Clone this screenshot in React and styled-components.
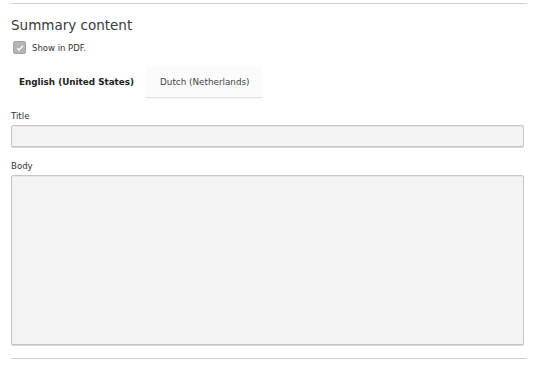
import React, { useState } from 'react'
import styled, { createGlobalStyle } from 'styled-components'

const GlobalStyle = createGlobalStyle`
  body {
    margin: 0;
    background: #fff;
    font-family: "DejaVu Sans", Verdana, sans-serif;
    color: #333;
  }
`

const Page = styled.div`
  width: 516px;
  padding: 3px 13px 0 11px;
  display: flex;
  flex-direction: column;
`

const Rule = styled.div`
  height: 1px;
  background: #cfcfcf;
  margin-top: ${p => p.$top || 0}px;
`

const Heading = styled.h2`
  margin: 13px 0 0;
  font-size: 13.5px;
  font-weight: normal;
  line-height: 17px;
  color: #3a3a3a;
`

const CheckRow = styled.label`
  display: flex;
  align-items: center;
  gap: 6px;
  margin-top: 7px;
  margin-left: 2px;
  font-size: 8.5px;
  color: #333;
`

const Box = styled.span`
  width: 11px;
  height: 11px;
  border-radius: 2px;
  background: #b4b4b4;
  border: 1px solid #a6a6a6;
  display: flex;
  align-items: center;
  justify-content: center;
`

const Tabs = styled.div`
  display: flex;
  margin-top: 12px;
  height: 31px;
`

const Tab = styled.button`
  border: none;
  font-family: inherit;
  font-size: 8.8px;
  font-weight: ${p => (p.$active ? 'bold' : 'normal')};
  color: ${p => (p.$active ? '#222' : '#444')};
  background: ${p => (p.$active ? 'transparent' : '#fbfbfb')};
  box-shadow: ${p => (p.$active ? 'none' : '0 1px 0 #e2e2e2, 0 2px 2px rgba(0,0,0,0.05)')};
  padding: 0 ${p => (p.$active ? '12px' : '12px')} 0 ${p => (p.$active ? '8px' : '14px')};
  cursor: pointer;
`

const Field = styled.div`
  display: flex;
  flex-direction: column;
  margin-top: ${p => p.$top}px;
`

const Label = styled.span`
  font-size: 8.6px;
  line-height: 11px;
  color: #333;
  margin-bottom: 3px;
`

const Input = styled.div`
  height: ${p => p.$h}px;
  box-sizing: border-box;
  width: 513px;
  background: #f4f4f4;
  border: 1px solid #c6c6c6;
  border-radius: 2px;
  box-shadow: inset 0 1px 1px rgba(0,0,0,0.06), 0 1px 0 #d8d8d8;
`

export default function App() {
  const [tab, setTab] = useState('en')
  return (
    <>
      <GlobalStyle />
      <Page>
        <Rule />
        <Heading>Summary content</Heading>
        <CheckRow>
          <Box>
            <svg width="8" height="8" viewBox="0 0 8 8">
              <path d="M1.3 4.2 L3.1 6 L6.8 1.8" fill="none" stroke="#fff" strokeWidth="1.4" />
            </svg>
          </Box>
          Show in PDF.
        </CheckRow>
        <Tabs>
          <Tab $active={tab === 'en'} onClick={() => setTab('en')}>English (United States)</Tab>
          <Tab $active={tab === 'nl'} onClick={() => setTab('nl')}>Dutch (Netherlands)</Tab>
        </Tabs>
        <Field $top={14}>
          <Label>Title</Label>
          <Input $h={22} />
        </Field>
        <Field $top={14}>
          <Label>Body</Label>
          <Input $h={170} />
        </Field>
        <Rule $top={13} />
      </Page>
    </>
  )
}
